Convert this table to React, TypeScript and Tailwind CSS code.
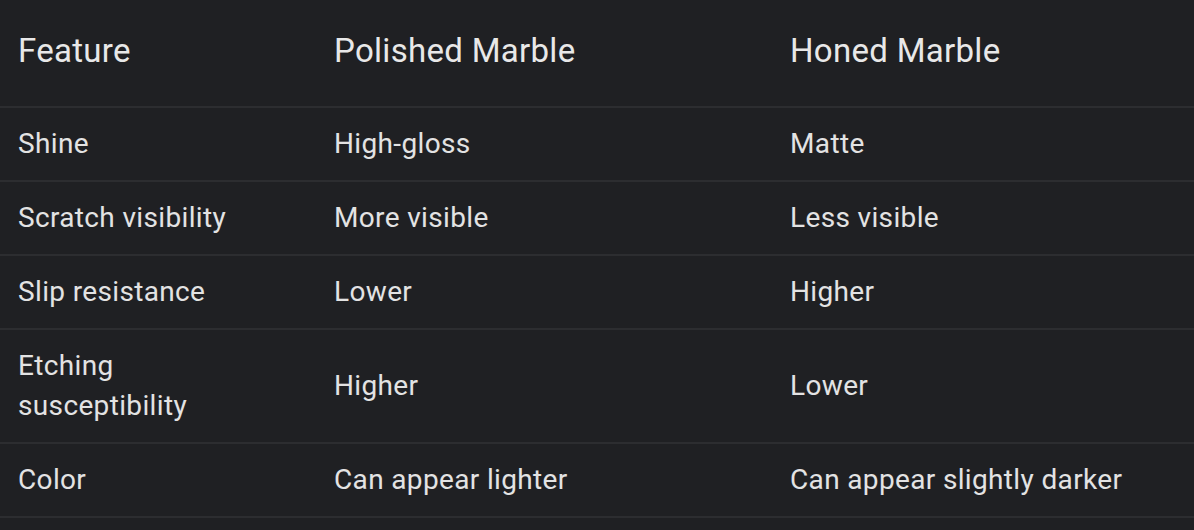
const rows: [string, string, string][] = [
  ["Shine", "High-gloss", "Matte"],
  ["Scratch visibility", "More visible", "Less visible"],
  ["Slip resistance", "Lower", "Higher"],
  ["Etching susceptibility", "Higher", "Lower"],
  ["Color", "Can appear lighter", "Can appear slightly darker"],
];

export default function App() {
  return (
    <div
      className="h-[530px] w-[1194px] overflow-hidden bg-[#1f2023] text-[#e3e3e3]"
      style={{ fontFamily: "Roboto, 'Noto Sans', sans-serif" }}
    >
      <table className="w-full border-collapse text-left">
        <colgroup>
          <col className="w-[316px]" />
          <col className="w-[456px]" />
          <col />
        </colgroup>
        <thead>
          <tr className="border-b-2 border-[#2c2d30]">
            {["Feature", "Polished Marble", "Honed Marble"].map((h) => (
              <th
                key={h}
                className="pl-[18px] pt-[31px] pb-[35px] align-middle text-[33px] font-normal leading-[40px] tracking-[0.3px] text-[#e8e8e8]"
              >
                {h}
              </th>
            ))}
          </tr>
        </thead>
        <tbody>
          {rows.map((r) => (
            <tr key={r[0]} className="border-b-2 border-[#2c2d30]">
              {/* feature name wraps in the narrow first column */}
              <td className="pl-[18px] pr-[40px] py-4 align-middle text-[28px] leading-[40px] tracking-[0.35px]">
                {r[0]}
              </td>
              <td className="pl-[18px] py-4 align-middle text-[28px] leading-[40px] tracking-[0.35px]">{r[1]}</td>
              <td className="pl-[18px] py-4 align-middle text-[28px] leading-[40px] tracking-[0.35px]">{r[2]}</td>
            </tr>
          ))}
        </tbody>
      </table>
    </div>
  );
}
